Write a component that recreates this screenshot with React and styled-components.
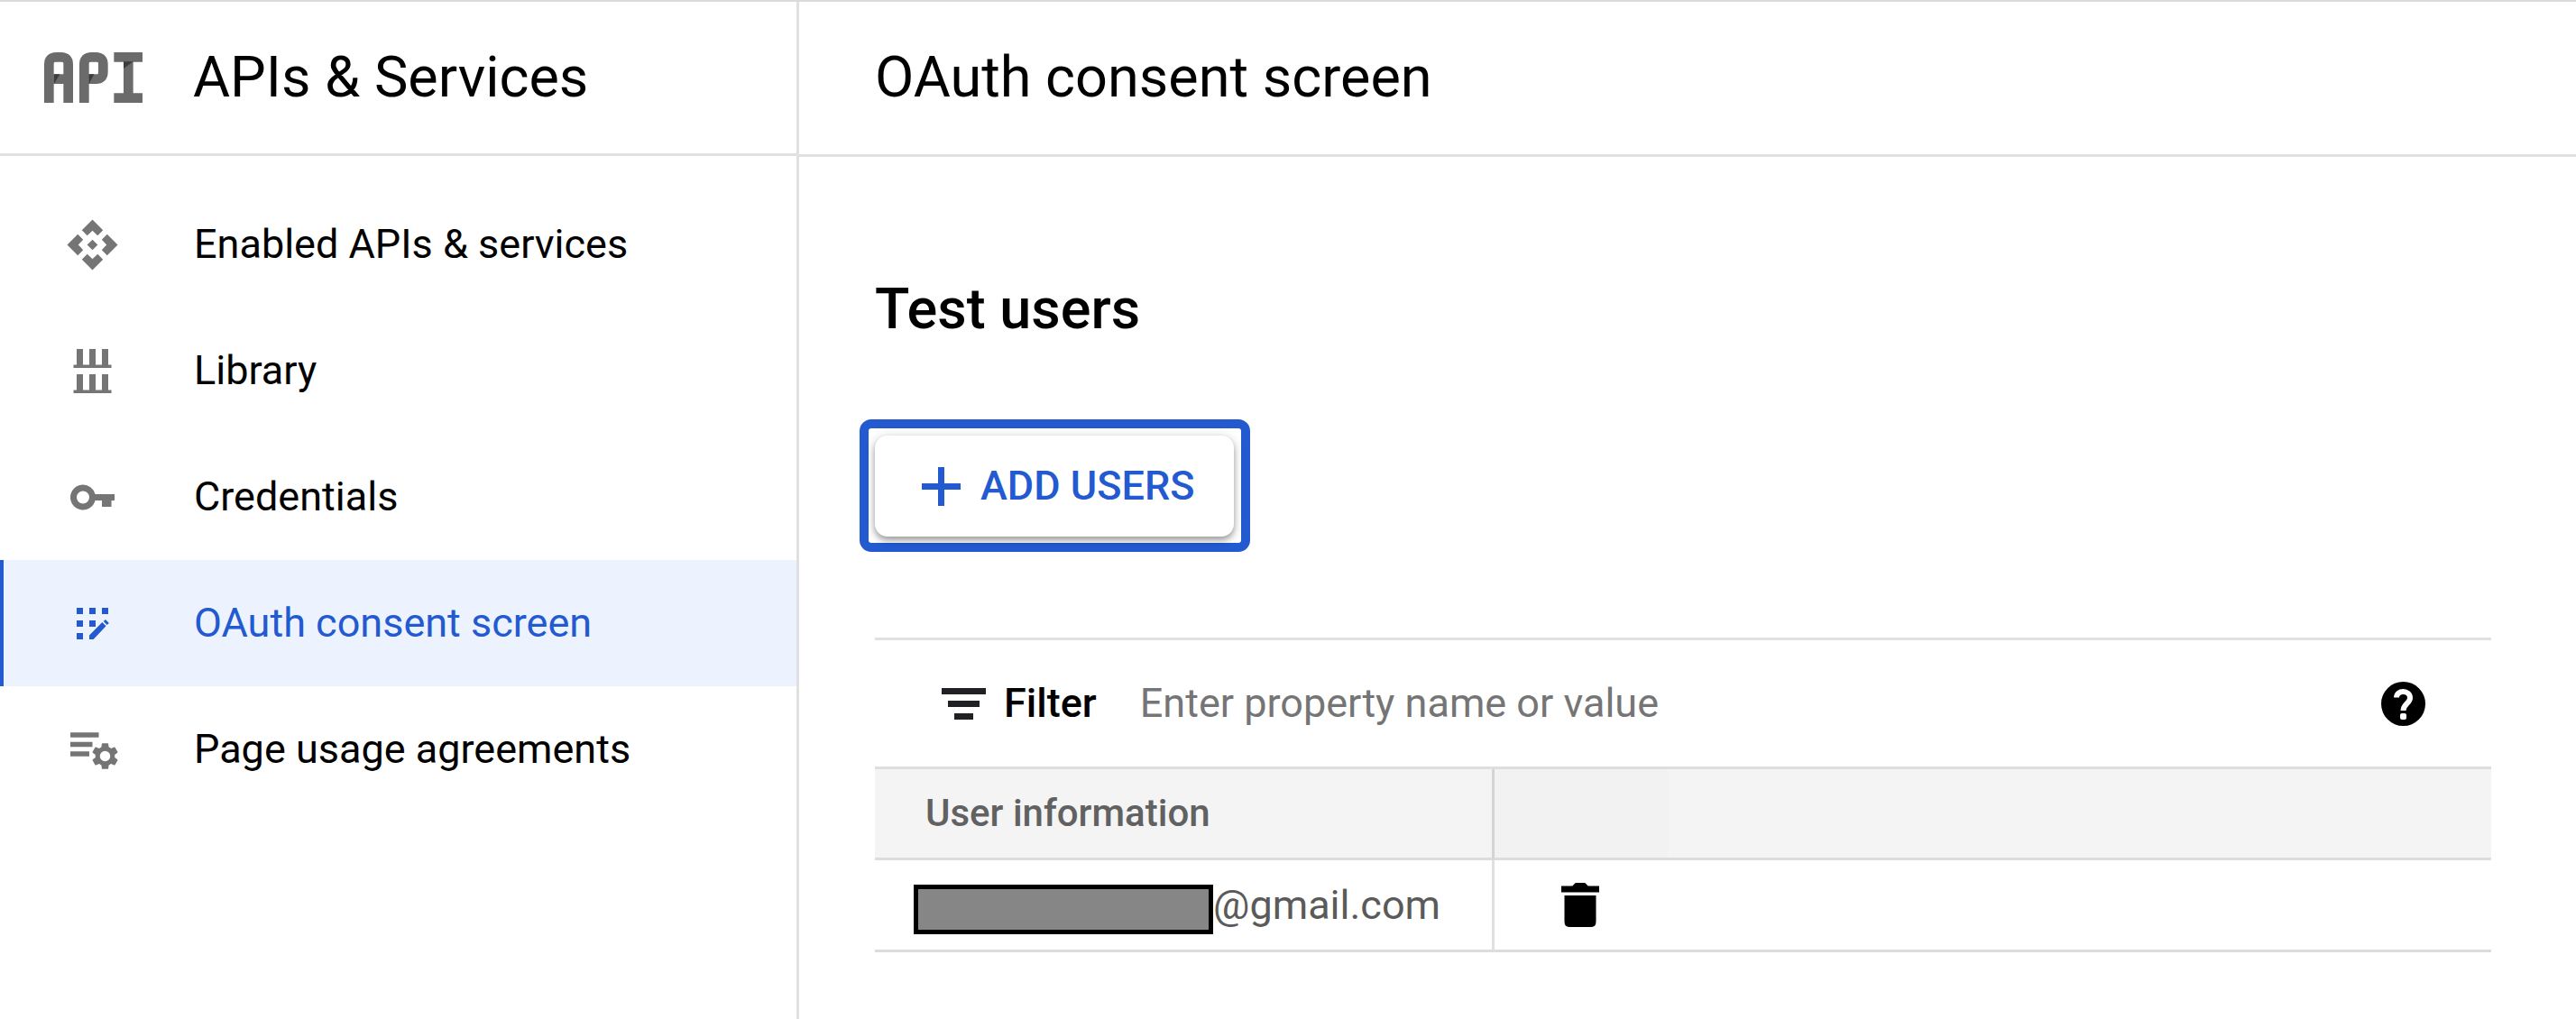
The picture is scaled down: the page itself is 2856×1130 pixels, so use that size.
import React from "react";
import styled, { createGlobalStyle, css } from "styled-components";

const BLUE = "#235ad0";
const LINE = "#e0e0e0";

const GlobalStyle = createGlobalStyle`
  *, *::before, *::after { box-sizing: border-box; }
  body {
    margin: 0;
    background: #fff;
    color: #000;
    font-family: Roboto, "Liberation Sans", sans-serif;
    font-size: 45px;
    line-height: 64px;
  }
  button, input { font: inherit; color: inherit; }
`;

const Shell = styled.div`
  display: flex;
  min-height: 100vh;
  border-top: 2px solid #dad9de;
`;

const Sidebar = styled.aside`
  flex: 0 0 886px;
  border-right: 3px solid ${LINE};
`;

const Header = styled.header`
  display: flex;
  align-items: center;
  height: ${(p) => (p.$main ? 172 : 171)}px;
  padding-left: ${(p) => (p.$main ? 84 : 49)}px;
  padding-bottom: ${(p) => (p.$main ? 2 : 0)}px;
  border-bottom: 3px solid ${LINE};
  gap: 56px;
`;

const Title = styled.h1`
  margin: 0;
  font-size: 63px;
  line-height: 70px;
  font-weight: 400;
`;

const Nav = styled.nav`
  padding-top: 28px;
`;

const NavList = styled.ul`
  list-style: none;
  margin: 0;
  padding: 0;
`;

const NavLink = styled.a`
  display: flex;
  align-items: center;
  gap: 81px;
  height: 140px;
  padding-left: 67px;
  border-left: 4px solid transparent;
  color: #000;
  text-decoration: none;
  svg { color: #757575; }
  ${(p) =>
    p.$active &&
    css`
      background: #ecf3fe;
      border-left-color: ${BLUE};
      color: ${BLUE};
      svg { color: ${BLUE}; }
    `}
`;

const NavIcon = styled.svg`
  width: 63px;
  height: 63px;
  flex: none;
  fill: currentColor;
`;

const Logo = styled.svg`
  width: 109px;
  height: 56px;
  flex: none;
`;

const Main = styled.main`
  flex: 1;
  min-width: 0;
`;

const Content = styled.section`
  padding: 134px 94px 56px 84px;
`;

const SectionTitle = styled.h2`
  margin: 0 0 87px;
  font-size: 63px;
  line-height: 70px;
  font-weight: 500;
`;

const Highlight = styled.div`
  width: fit-content;
  margin: 0 0 95px -17px;
  padding: 8px 8px 7px 7px;
  border: 10px solid ${BLUE};
  border-radius: 13px;
`;

const AddButton = styled.button`
  display: flex;
  align-items: center;
  gap: 22px;
  height: 112px;
  padding: 0 44px 0 52px;
  border: 0;
  border-radius: 14px;
  background: #fff;
  color: ${BLUE};
  font-weight: 500;
  box-shadow: 0 4px 7px rgba(0, 0, 0, 0.34), 0 1px 14px rgba(0, 0, 0, 0.12);
  svg { width: 43px; height: 43px; fill: currentColor; }
`;

const FilterBar = styled.div`
  display: flex;
  align-items: center;
  height: 143px;
  padding: 0 73px 0 74px;
  border-top: 3px solid ${LINE};
`;

const FilterLabel = styled.label`
  display: flex;
  align-items: center;
  gap: 20px;
  font-weight: 500;
  svg { width: 49px; height: 35px; fill: #202124; }
`;

const FilterInput = styled.input`
  flex: 1;
  min-width: 0;
  margin-left: 48px;
  padding: 0;
  border: 0;
  outline: 0;
  background: none;
  &::placeholder { color: #757575; opacity: 1; }
`;

const IconButton = styled.button`
  display: block;
  padding: 0;
  border: 0;
  background: none;
  color: #000;
  svg { display: block; width: ${(p) => p.$width}px; height: 49px; fill: currentColor; }
`;

const Table = styled.table`
  width: 100%;
  table-layout: fixed;
  border-collapse: separate;
  border-spacing: 0;
  border-top: 3px solid #dedede;
`;

const Col = styled.col`
  width: ${(p) => p.$width};
`;

const HeadCell = styled.th`
  height: 101px;
  padding: 0 0 0 56px;
  background: ${(p) => (p.$shaded ? "#f2f2f2" : "#f4f4f4")};
  border-bottom: 3px solid #dcdcdc;
  border-right: ${(p) => (p.$divided ? "3px solid #d4d4d4" : "0")};
  color: #616161;
  font-size: 42px;
  font-weight: 500;
  text-align: left;
`;

const Cell = styled.td`
  height: 102px;
  padding: 0 0 0 ${(p) => p.$inset || 0}px;
  border-bottom: 3px solid #dcdcdc;
  border-right: ${(p) => (p.$divided ? `3px solid ${LINE}` : "0")};
  color: #5a5a5a;
`;

const Email = styled.div`
  display: flex;
  align-items: flex-end;
`;

const Redacted = styled.span`
  width: 332px;
  height: 55px;
  border: 5px solid #000;
  background: #868686;
`;

const ApiLogo = () => (
  <Logo viewBox="0 0 327 168" role="img" aria-label="API">
    <g fill="none" stroke="#6b6b6b" strokeWidth="32">
      <path d="M16 168V40Q16 16 40 16H56Q80 16 80 40V168M16 89H80" />
      <path d="M133 168V40Q133 16 157 16H172Q196 16 196 40V65Q196 89 172 89H133" />
      <path d="M232 16H327M232 152H327M280 16V152" />
    </g>
    <path d="M33 73h19L33 105zM149 73h17l-17 32zM264 31h32L264 54z" fill="#3d3d3d" />
  </Logo>
);

const ICONS = {
  api: (
    <g transform="translate(9 9)">
      {[0, 90, 180, 270].map((a) => (
        <path key={a} transform={`rotate(${a})`} d="M0-8L3.35-4.65 1.65-2.95 0-4.5-1.65-2.95-3.35-4.65z" />
      ))}
      <path d="M0-1.67L1.67 0 0 1.67-1.67 0z" />
    </g>
  ),
  library: (
    <path d="M4 2h2v5h2V2h2v5h2V2h2v5h1v1H3V7h1zM4 10h2v5h2v-5h2v5h2v-5h2v5h1v1H3v-1h1z" />
  ),
  key: (
    <path
      fillRule="evenodd"
      d="M6 5a4 4 0 0 1 3.87 3H16v2h-1v2h-3v-2H9.87A4 4 0 1 1 6 5zM6 7a2 2 0 1 0 0 4 2 2 0 0 0 0-4z"
    />
  ),
  consent: (
    <path d="M4 4h2v2H4zM8 4h2v2H8zM12 4h2v2h-2zM4 8h2v2H4zM8 8h2v2H8zM4 12h2v2H4zM8 14v-1.3l4.1-4.1 1.2 1.2L9.3 14zM12.5 8.3l.65-.6 1.1 1.15-.65.6z" />
  ),
  agreements: (
    <>
      <path d="M2 3.5h9v1.6H2zM2 6.5h7v1.6H2zM2 9.5h6v1.6H2z" />
      <path
        transform="translate(8.08 6.08) scale(.41)"
        d="M19.43 12.98c.04-.32.07-.64.07-.98s-.03-.66-.07-.98l2.11-1.65c.19-.15.24-.42.12-.64l-2-3.46c-.12-.22-.39-.3-.61-.22l-2.49 1c-.52-.4-1.08-.73-1.69-.98l-.38-2.65C14.46 2.18 14.25 2 14 2h-4c-.25 0-.46.18-.49.42l-.38 2.65c-.61.25-1.17.59-1.69.98l-2.49-1c-.23-.09-.49 0-.61.22l-2 3.46c-.13.22-.07.49.12.64l2.11 1.65c-.04.32-.07.65-.07.98s.03.66.07.98l-2.11 1.65c-.19.15-.24.42-.12.64l2 3.46c.12.22.39.3.61.22l2.49-1c.52.4 1.08.73 1.69.98l.38 2.65c.03.24.24.42.49.42h4c.25 0 .46-.18.49-.42l.38-2.65c.61-.25 1.17-.59 1.69-.98l2.49 1c.23.09.49 0 .61-.22l2-3.46c.12-.22.07-.49-.12-.64l-2.11-1.65zM12 16a4 4 0 1 1 0-8 4 4 0 0 1 0 8z"
      />
    </>
  ),
};

const NAV = [
  { icon: "api", label: "Enabled APIs & services" },
  { icon: "library", label: "Library" },
  { icon: "key", label: "Credentials" },
  { icon: "consent", label: "OAuth consent screen", active: true },
  { icon: "agreements", label: "Page usage agreements" },
];

export default function App() {
  return (
    <>
      <GlobalStyle />
      <Shell>
        <Sidebar>
          <Header>
            <ApiLogo />
            <Title as="div">APIs &amp; Services</Title>
          </Header>
          <Nav aria-label="APIs & Services">
            <NavList>
              {NAV.map(({ icon, label, active }) => (
                <li key={label}>
                  <NavLink href="#" $active={active} aria-current={active ? "page" : undefined}>
                    <NavIcon viewBox="0 0 18 18" aria-hidden="true">{ICONS[icon]}</NavIcon>
                    {label}
                  </NavLink>
                </li>
              ))}
            </NavList>
          </Nav>
        </Sidebar>
        <Main>
          <Header $main>
            <Title>OAuth consent screen</Title>
          </Header>
          <Content>
            <SectionTitle>Test users</SectionTitle>
            <Highlight>
              <AddButton type="button">
                <svg viewBox="0 0 43 43" aria-hidden="true">
                  <path d="M18 0h7v18h18v7H25v18h-7V25H0v-7h18z" />
                </svg>
                ADD USERS
              </AddButton>
            </Highlight>
            <FilterBar>
              <FilterLabel htmlFor="filter">
                <svg viewBox="0 0 14 10" aria-hidden="true">
                  <path d="M0 0h14v2H0zM2 4h10v2H2zM4 8h6v2H4z" />
                </svg>
                Filter
              </FilterLabel>
              <FilterInput id="filter" type="text" placeholder="Enter property name or value" />
              <IconButton type="button" aria-label="Help" $width={49}>
                <svg viewBox="0 0 49 49" aria-hidden="true">
                  <circle cx="24.5" cy="24.5" r="24.5" />
                  <path
                    d="M17 17.5C17 8.5 32 9 32 18C32 24 24.5 24.5 24.5 32"
                    fill="none"
                    stroke="#fff"
                    strokeWidth="6"
                  />
                  <rect x="21" y="35" width="7" height="7" rx="2" fill="#fff" />
                </svg>
              </IconButton>
            </FilterBar>
            <Table>
              <colgroup>
                <Col $width="687px" />
                <Col $width="192px" />
                <Col $width="auto" />
              </colgroup>
              <thead>
                <tr>
                  <HeadCell scope="col" $divided>User information</HeadCell>
                  <HeadCell as="td" $shaded />
                  <HeadCell as="td" />
                </tr>
              </thead>
              <tbody>
                <tr>
                  <Cell $inset={43} $divided>
                    <Email>
                      <Redacted />
                      @gmail.com
                    </Email>
                  </Cell>
                  <Cell $inset={74}>
                    <IconButton type="button" aria-label="Delete user" $width={42}>
                      <svg viewBox="0 0 12 14" aria-hidden="true">
                        <path d="M0 1h3.5l1-1h3l1 1H12v2H0zM1 4h10v8.3Q11 14 9.5 14h-7Q1 14 1 12.3z" />
                      </svg>
                    </IconButton>
                  </Cell>
                  <Cell />
                </tr>
              </tbody>
            </Table>
          </Content>
        </Main>
      </Shell>
    </>
  );
}
